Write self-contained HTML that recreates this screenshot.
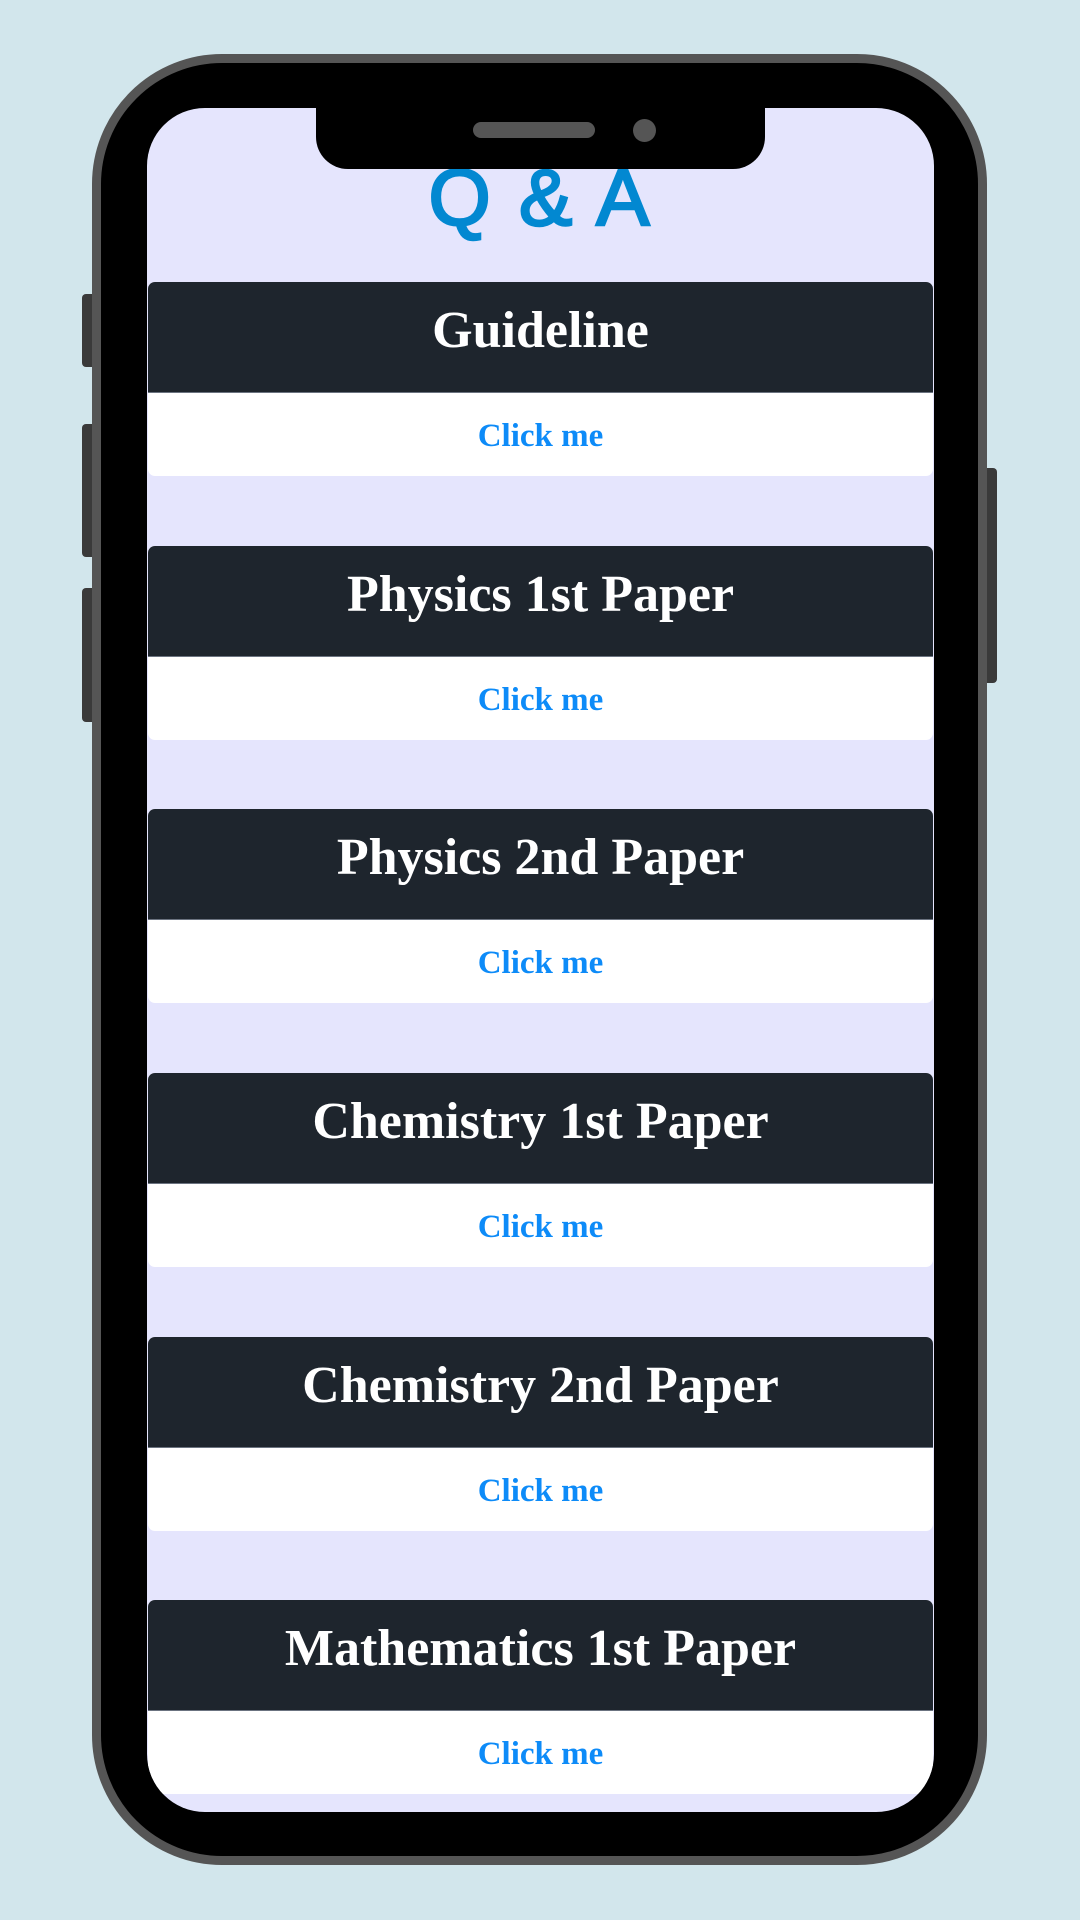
<!DOCTYPE html>
<html><head><meta charset="utf-8"><style>
*{margin:0;padding:0;box-sizing:border-box}
html,body{width:1080px;height:1920px;background:#d2e6ec;overflow:hidden;position:relative}
.btn{position:absolute;background:#3a3a3a;border-radius:4px}
.phone{position:absolute;left:92px;top:54px;width:895px;height:1811px;background:#000;border:9px solid #555;border-radius:130px}
.screen{position:absolute;left:147px;top:108px;width:787px;height:1704px;background:#e5e5fd;border-radius:58px;overflow:hidden}
.notch{position:absolute;left:316px;top:100px;width:449px;height:69px;background:#000;border-radius:0 0 32px 32px}
.spk{position:absolute;left:473px;top:122px;width:122px;height:16px;background:#555;border-radius:8px}
.cam{position:absolute;left:633px;top:119px;width:23px;height:23px;background:#555;border-radius:50%}
.title{position:absolute;left:0;width:787px;top:50px;text-align:center;font-family:"Liberation Sans",sans-serif;font-size:80px;line-height:80px;color:#0288d1;letter-spacing:3px;-webkit-text-stroke:2.5px #0288d1}
.card{position:absolute;left:1px;width:785px;height:194px;border-radius:7px;overflow:hidden;background:#fff}
.hd{height:111px;background:#1e252d;color:#fff;text-align:center;font-family:"Liberation Serif",serif;font-weight:bold;font-size:52px;line-height:98px;border-bottom:1px solid #6b7380}
.bd{height:83px;text-align:center;font-family:"Liberation Serif",serif;font-weight:bold;font-size:33px;line-height:86px;color:#0d8bf8}
</style></head><body>
<div class="btn" style="left:82px;top:294px;width:14px;height:73px"></div>
<div class="btn" style="left:82px;top:424px;width:14px;height:133px"></div>
<div class="btn" style="left:82px;top:588px;width:14px;height:134px"></div>
<div class="btn" style="left:983px;top:468px;width:14px;height:215px"></div>
<div class="phone"></div>
<div class="screen">
<div class="title">Q &amp; A</div>
<div class="card" style="top:174px"><div class="hd">Guideline</div><div class="bd">Click me</div></div>
<div class="card" style="top:438px"><div class="hd">Physics 1st Paper</div><div class="bd">Click me</div></div>
<div class="card" style="top:701px"><div class="hd">Physics 2nd Paper</div><div class="bd">Click me</div></div>
<div class="card" style="top:965px"><div class="hd">Chemistry 1st Paper</div><div class="bd">Click me</div></div>
<div class="card" style="top:1229px"><div class="hd">Chemistry 2nd Paper</div><div class="bd">Click me</div></div>
<div class="card" style="top:1492px"><div class="hd">Mathematics 1st Paper</div><div class="bd">Click me</div></div>
</div>
<div class="notch"></div>
<div class="spk"></div>
<div class="cam"></div>
</body></html>
